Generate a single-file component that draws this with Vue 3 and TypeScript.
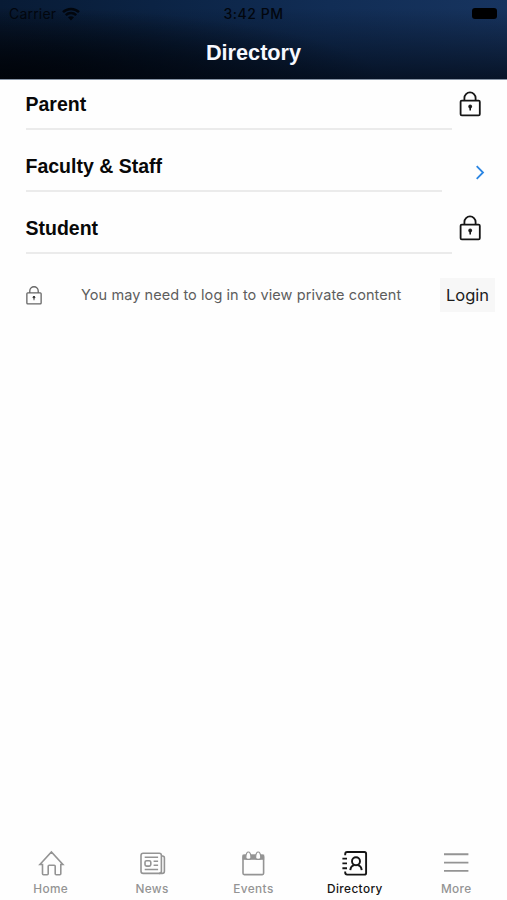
<script setup lang="ts">
interface DirectoryEntry {
  name: string
  locked: boolean
}

interface Tab {
  label: string
  icon: 'home' | 'news' | 'events' | 'directory' | 'more'
}

const entries: DirectoryEntry[] = [
  { name: 'Parent', locked: true },
  { name: 'Faculty & Staff', locked: false },
  { name: 'Student', locked: true },
]

const tabs: Tab[] = [
  { label: 'Home', icon: 'home' },
  { label: 'News', icon: 'news' },
  { label: 'Events', icon: 'events' },
  { label: 'Directory', icon: 'directory' },
  { label: 'More', icon: 'more' },
]

const activeTab = 'Directory'
</script>

<template>
  <div class="screen">
    <header class="header">
      <div class="status">
        <div class="carrier">
          <span class="carrier-name">Carrier</span>
          <svg class="wifi" viewBox="0 0 18 14" width="18" height="14">
            <path d="M1 5.2C5.5 .9 12.5 .9 17 5.2" />
            <path d="M3.8 8.1C6.7 5.4 11.3 5.4 14.2 8.1" />
            <path class="wifi-dot" d="M6 10.3C7.7 8.8 10.3 8.8 12 10.3L9 13.4Z" />
          </svg>
        </div>
        <span class="time">3:42 PM</span>
        <div class="power"><span class="battery"></span></div>
      </div>
      <h1 class="title">Directory</h1>
    </header>

    <main class="content">
      <div v-for="entry in entries" :key="entry.name" class="row" :class="{ open: !entry.locked }">
        <span class="name">{{ entry.name }}</span>
        <svg v-if="entry.locked" class="lock" viewBox="0 0 22 26" width="22" height="26">
          <path d="M5.4 9.6V7a5.6 5.6 0 0 1 11.2 0v2.6" />
          <rect x="1.6" y="9.6" width="19.2" height="14.8" rx="1.2" />
          <circle class="hole" cx="11.2" cy="15.5" r="1.9" />
          <path class="slot" d="M11.2 15.5v4" />
        </svg>
        <svg v-else class="chevron" viewBox="0 0 10 16" width="10" height="16">
          <path d="M1.7 2.2 8 8.5 1.7 14.8" />
        </svg>
      </div>

      <div class="notice">
        <svg class="small-lock" viewBox="0 0 22 26" width="16" height="19">
          <path d="M5.2 9.4V6.8a5.8 5.8 0 0 1 11.6 0v2.6" />
          <rect x="1.2" y="9.4" width="19.6" height="15" rx="1.2" />
          <circle class="hole" cx="11" cy="15.3" r="1.7" />
          <path class="slot" d="M11 15.5v4" />
        </svg>
        <span class="message">You may need to log in to view private content</span>
        <button class="login" type="button">Login</button>
      </div>
    </main>

    <nav class="tabs">
      <a v-for="tab in tabs" :key="tab.label" class="tab" :class="{ active: tab.label === activeTab }">
        <svg class="icon" viewBox="0 0 28 28" width="28" height="28">
          <template v-if="tab.icon === 'home'">
            <path d="M2.9 15.5 14.4 3l11.5 12.5h-2.1v9.2a1 1 0 0 1-1 1h-3.6a1 1 0 0 1-1-1v-7.5a1 1 0 0 0-1-1h-5a1 1 0 0 0-1 1v7.5a1 1 0 0 1-1 1H6.5a1 1 0 0 1-1-1v-9.2Z" />
          </template>
          <template v-else-if="tab.icon === 'news'">
            <rect x="3" y="4.2" width="20.4" height="20.2" rx="2.2" />
            <path d="M23.4 7h1a2 2 0 0 1 2 2v13.2a2.2 2.2 0 0 1-2.2 2.2H21" />
            <path d="M6.7 8.3h13.4M6.7 20.5h13.4M15.6 12.3h4.5M15.6 16.3h4.5" />
            <rect x="7" y="11.7" width="5.8" height="5.4" rx="1.6" />
          </template>
          <template v-else-if="tab.icon === 'events'">
            <path class="band" d="M3.6 5.6h21.6v5.2H3.6Z" />
            <rect x="4" y="6.4" width="20.6" height="19.2" rx="1.3" />
            <path class="ring" d="M6.8 8.4C7 5 7.8 3 9.4 3s2.4 2 2.6 5.4a2.6 2 0 0 1-5.2 0ZM16.6 8.4c.2-3.4 1-5.4 2.6-5.4s2.4 2 2.6 5.4a2.6 2 0 0 1-5.2 0Z" />
          </template>
          <template v-else-if="tab.icon === 'directory'">
            <path d="M4.2 6.2V5a2 2 0 0 1 2-2h17.2a1.7 1.7 0 0 1 1.7 1.7v19.2a1.7 1.7 0 0 1-1.7 1.7H6.2a2 2 0 0 1-2-2v-1.2" />
            <path d="M1.4 9.6H6M1.4 14.4H6M1.4 19.2H6" />
            <circle cx="15" cy="12.2" r="4" />
            <path d="M9.3 21.2c.3-3.2 1.8-4.8 4.2-5.2M20.7 21.2c-.3-3.2-1.8-4.8-4.2-5.2" />
          </template>
          <template v-else>
            <path class="bar" d="M2 5.3h24.4M2 13.6h24.4M2 21.9h24.4" />
          </template>
        </svg>
        <span class="label">{{ tab.label }}</span>
      </a>
    </nav>
  </div>
</template>

<style>
body {
  background: #fff;
}
</style>

<style scoped>
.screen {
  display: flex;
  flex-direction: column;
  height: 900px;
  overflow: hidden;
  background: #fefefe;
  font-family: Inter, "Liberation Sans", sans-serif;
}

.header {
  box-sizing: border-box;
  height: 80px;
  flex: none;
  border-bottom: 1px solid #8794a5;
  background: linear-gradient(180deg, rgba(0, 4, 12, 0) 10%, rgba(0, 5, 14, 0.68) 100%),
    radial-gradient(ellipse 380px 72px at 0 100%, rgba(0, 0, 0, 0.95) 0%, rgba(0, 0, 0, 0) 100%),
    linear-gradient(90deg, #081b35 0%, #0b2344 30%, #112d55 65%, #17345f 100%);
}

.status {
  display: grid;
  grid-template-columns: 1fr auto 1fr;
  align-items: center;
  height: 27px;
  padding: 0 10px 0 9px;
  color: #02060d;
}

.carrier {
  display: flex;
  align-items: center;
  gap: 6px;
}

.carrier-name {
  font-size: 14px;
  letter-spacing: 0.2px;
}

.wifi {
  fill: none;
  stroke: currentColor;
  stroke-width: 2.5;
}

.wifi-dot {
  fill: currentColor;
  stroke: none;
}

.time {
  padding-left: 1px;
  font-size: 14px;
  font-weight: 500;
  letter-spacing: 0.5px;
}

.power {
  display: flex;
  justify-content: flex-end;
}

.battery {
  width: 25px;
  height: 11px;
  border-radius: 3px;
  background: #000;
}

.title {
  margin: 0;
  color: #f7f9ff;
  font: bold 21.7px/51px "Liberation Sans", sans-serif;
  text-align: center;
}

.content {
  flex: 1;
}

.row {
  box-sizing: border-box;
  display: grid;
  grid-template-columns: 426.5px 22px;
  column-gap: 7px;
  height: 62px;
  padding-left: 25.5px;
}

.row:first-child {
  height: 50px;
}

.row.open {
  grid-template-columns: 416.5px 10px;
  column-gap: 33px;
}

.name {
  display: flex;
  align-items: flex-end;
  padding-bottom: 12px;
  border-bottom: 2px solid #ebebeb;
  color: #080808;
  font: bold 19.5px/23px "Liberation Sans", sans-serif;
}

.lock {
  align-self: end;
  margin-bottom: 13px;
  fill: none;
  stroke: #151515;
  stroke-width: 1.8;
}

.hole {
  fill: #222;
  stroke: none;
}

.slot {
  stroke-width: 1.6;
}

.chevron {
  align-self: end;
  margin-bottom: 12px;
  fill: none;
  stroke: #2b86e3;
  stroke-width: 1.8;
}

.notice {
  display: flex;
  align-items: center;
  height: 34px;
  margin-top: 24px;
  padding: 0 12px 0 26px;
}

.small-lock {
  margin-right: 39px;
  fill: none;
  stroke: #666;
  stroke-width: 1.8;
}

.message {
  flex: 1;
  padding-bottom: 2px;
  color: #5d5d5d;
  font-size: 14.5px;
  letter-spacing: 0.08px;
  white-space: nowrap;
}

.login {
  width: 55px;
  height: 34px;
  padding: 0;
  border: 0;
  background: #f7f7f7;
  color: #1c1c1c;
  font: 16.5px Inter, sans-serif;
}

.tabs {
  display: grid;
  grid-template-columns: repeat(5, 1fr);
  height: 51px;
  flex: none;
}

.tab {
  display: flex;
  flex-direction: column;
  align-items: center;
  color: #949494;
}

.tab.active {
  color: #151515;
}

.icon {
  flex: none;
  fill: none;
  stroke: currentColor;
  stroke-width: 1.6;
}

.active .icon {
  stroke-width: 1.9;
}

.band {
  fill: currentColor;
  stroke: none;
}

.ring {
  fill: #fefefe;
  stroke-width: 1.2;
}

.bar {
  stroke-width: 1.9;
}

.label {
  margin-top: 5px;
  font-size: 11.8px;
  font-weight: 500;
  line-height: 15px;
  letter-spacing: 0.4px;
}
</style>
